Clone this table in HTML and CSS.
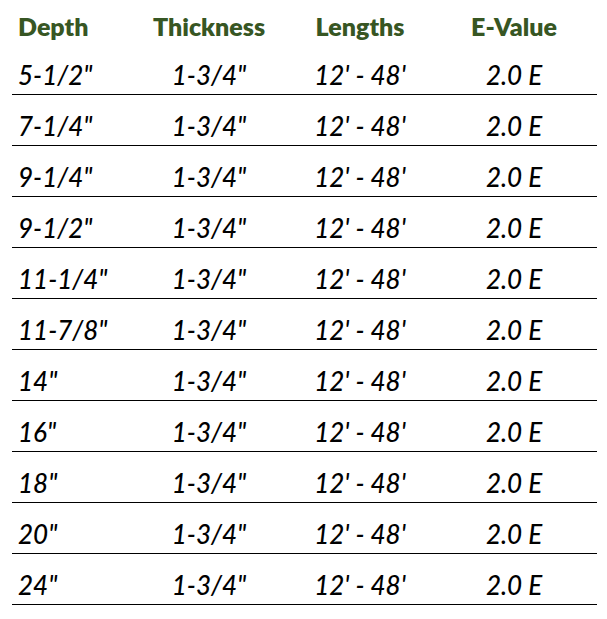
FILE: index.html
```html
<!DOCTYPE html>
<html lang="en">
<head>
<meta charset="utf-8">
<title>Beam Sizes</title>
<link rel="stylesheet" href="styles.css">
</head>
<body>
<div class="spec-table">
  <div class="row head">
    <div class="cell first">Depth</div>
    <div class="cell">Thickness</div>
    <div class="cell">Lengths</div>
    <div class="cell">E-Value</div>
  </div>
  <div class="row"><div class="cell first">5-1/2"</div><div class="cell">1-3/4"</div><div class="cell">12' - 48'</div><div class="cell">2.0 E</div></div>
  <div class="row"><div class="cell first">7-1/4"</div><div class="cell">1-3/4"</div><div class="cell">12' - 48'</div><div class="cell">2.0 E</div></div>
  <div class="row"><div class="cell first">9-1/4"</div><div class="cell">1-3/4"</div><div class="cell">12' - 48'</div><div class="cell">2.0 E</div></div>
  <div class="row"><div class="cell first">9-1/2"</div><div class="cell">1-3/4"</div><div class="cell">12' - 48'</div><div class="cell">2.0 E</div></div>
  <div class="row"><div class="cell first">11-1/4"</div><div class="cell">1-3/4"</div><div class="cell">12' - 48'</div><div class="cell">2.0 E</div></div>
  <div class="row"><div class="cell first">11-7/8"</div><div class="cell">1-3/4"</div><div class="cell">12' - 48'</div><div class="cell">2.0 E</div></div>
  <div class="row"><div class="cell first">14"</div><div class="cell">1-3/4"</div><div class="cell">12' - 48'</div><div class="cell">2.0 E</div></div>
  <div class="row"><div class="cell first">16"</div><div class="cell">1-3/4"</div><div class="cell">12' - 48'</div><div class="cell">2.0 E</div></div>
  <div class="row"><div class="cell first">18"</div><div class="cell">1-3/4"</div><div class="cell">12' - 48'</div><div class="cell">2.0 E</div></div>
  <div class="row"><div class="cell first">20"</div><div class="cell">1-3/4"</div><div class="cell">12' - 48'</div><div class="cell">2.0 E</div></div>
  <div class="row"><div class="cell first">24"</div><div class="cell">1-3/4"</div><div class="cell">12' - 48'</div><div class="cell">2.0 E</div></div>
</div>
</body>
</html>
```

FILE: styles.css
```css
html, body {
  margin: 0;
  padding: 0;
  background: #ffffff;
}

.spec-table {
  width: 585px;
  margin-left: 12px;
  font-family: Lato, "Open Sans", sans-serif;
}

.row {
  display: grid;
  grid-template-columns: 130px 134px 168px 140px 13px;
  align-items: end;
  height: 50px;
  border-bottom: 1px solid #000000;
  font-style: italic;
  font-weight: 500;
  font-size: 26px;
  color: #000000;
}

.row .cell {
  text-align: center;
  line-height: 1.2;
  padding-bottom: 3px;
  white-space: nowrap;
}

.row .cell.first {
  text-align: left;
  padding-left: 6px;
}

.row.head {
  height: 44px;
  border-bottom: none;
  align-items: start;
  font-style: normal;
  font-weight: 800;
  font-size: 25px;
  color: #375623;
}

.row.head .cell {
  padding-top: 11px;
  padding-bottom: 0;
}
```
